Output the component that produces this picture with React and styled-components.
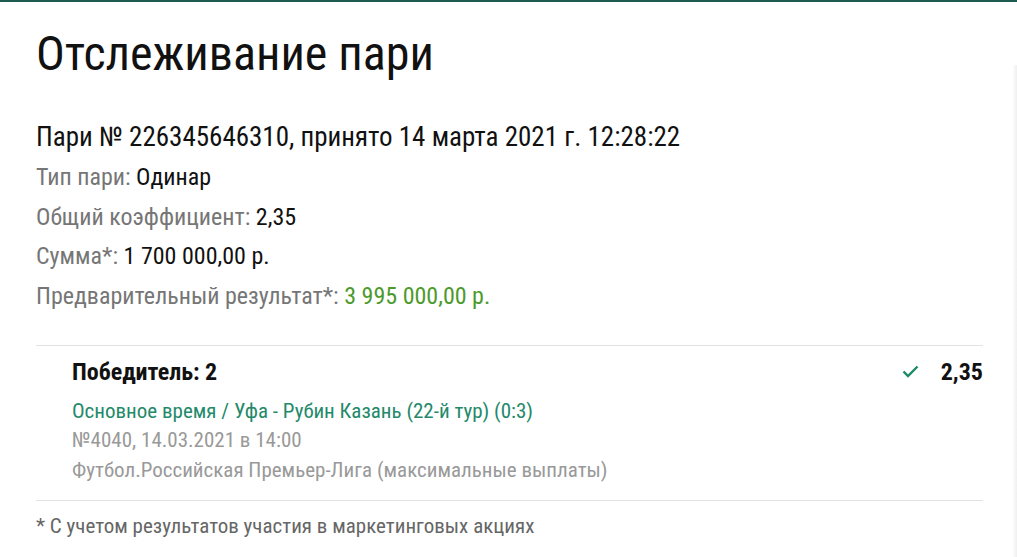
import React from "react";
import styled, { createGlobalStyle } from "styled-components";

const GlobalStyle = createGlobalStyle`
  html, body {
    margin: 0;
    padding: 0;
    background: #fff;
  }
  body {
    font-family: "Roboto Condensed", Roboto, sans-serif;
    color: #111;
  }
`;

const Page = styled.div`
  display: flex;
  min-height: 557px;
  border-top: 2px solid #1d5b50;
  box-sizing: border-box;
`;

const Main = styled.div`
  flex: 1;
  padding: 24px 30px 0 36px;
`;

const Edge = styled.div`
  width: 4px;
  margin-top: 63px;
  background: linear-gradient(to right, #fbfbfb, #f0f0f0);
`;

const Title = styled.h1`
  margin: 0;
  font-size: 48px;
  font-weight: 400;
  line-height: 56px;
`;

const BetHead = styled.div`
  margin-top: 39px;
  font-size: 27px;
  line-height: 32px;
`;

const Info = styled.div`
  display: flex;
  flex-direction: column;
  margin-top: 5px;
`;

const InfoRow = styled.div`
  font-size: 24px;
  line-height: 39.7px;
`;

const Label = styled.span`
  color: #767676;
`;

const Value = styled.span`
  color: ${(p) => (p.$green ? "#4d9a2c" : "#111")};
`;

const Event = styled.div`
  margin-top: 28px;
  border-top: 1px solid #e2e2e2;
  border-bottom: 1px solid #e2e2e2;
  padding: 12px 0 15px 36px;
`;

const EventHead = styled.div`
  display: flex;
  align-items: center;
  justify-content: space-between;
  height: 28px;
  margin-bottom: 11px;
`;

const Outcome = styled.div`
  font-size: 24px;
  font-weight: 700;
`;

const Odds = styled.div`
  display: flex;
  align-items: center;
  gap: 22px;
  font-size: 24px;
  font-weight: 700;
`;

const EventLine = styled.div`
  font-size: 21px;
  line-height: 29.5px;
  color: ${(p) => (p.$green ? "#23896a" : "#999")};
`;

const Note = styled.div`
  margin-top: 11px;
  font-size: 21px;
  line-height: 29.5px;
  color: #666;
`;

function Check() {
  return (
    <svg width="17" height="13" viewBox="0 0 17 13" fill="none">
      <path d="M1.5 6.5 L6 11 L15.5 1.5" stroke="#1a8a68" strokeWidth="2.4" />
    </svg>
  );
}

export default function App() {
  return (
    <>
      <GlobalStyle />
      <Page>
        <Main>
          <Title>Отслеживание пари</Title>
          <BetHead>Пари № 226345646310, принято 14 марта 2021 г. 12:28:22</BetHead>
          <Info>
            <InfoRow>
              <Label>Тип пари: </Label>
              <Value>Одинар</Value>
            </InfoRow>
            <InfoRow>
              <Label>Общий коэффициент: </Label>
              <Value>2,35</Value>
            </InfoRow>
            <InfoRow>
              <Label>Сумма*: </Label>
              <Value>1 700 000,00 р.</Value>
            </InfoRow>
            <InfoRow>
              <Label>Предварительный результат*: </Label>
              <Value $green>3 995 000,00 р.</Value>
            </InfoRow>
          </Info>
          <Event>
            <EventHead>
              <Outcome>Победитель: 2</Outcome>
              <Odds>
                <Check />
                2,35
              </Odds>
            </EventHead>
            <EventLine $green>Основное время / Уфа - Рубин Казань (22-й тур) (0:3)</EventLine>
            <EventLine>№4040, 14.03.2021 в 14:00</EventLine>
            <EventLine>Футбол.Российская Премьер-Лига (максимальные выплаты)</EventLine>
          </Event>
          <Note>* С учетом результатов участия в маркетинговых акциях</Note>
        </Main>
        <Edge />
      </Page>
    </>
  );
}
